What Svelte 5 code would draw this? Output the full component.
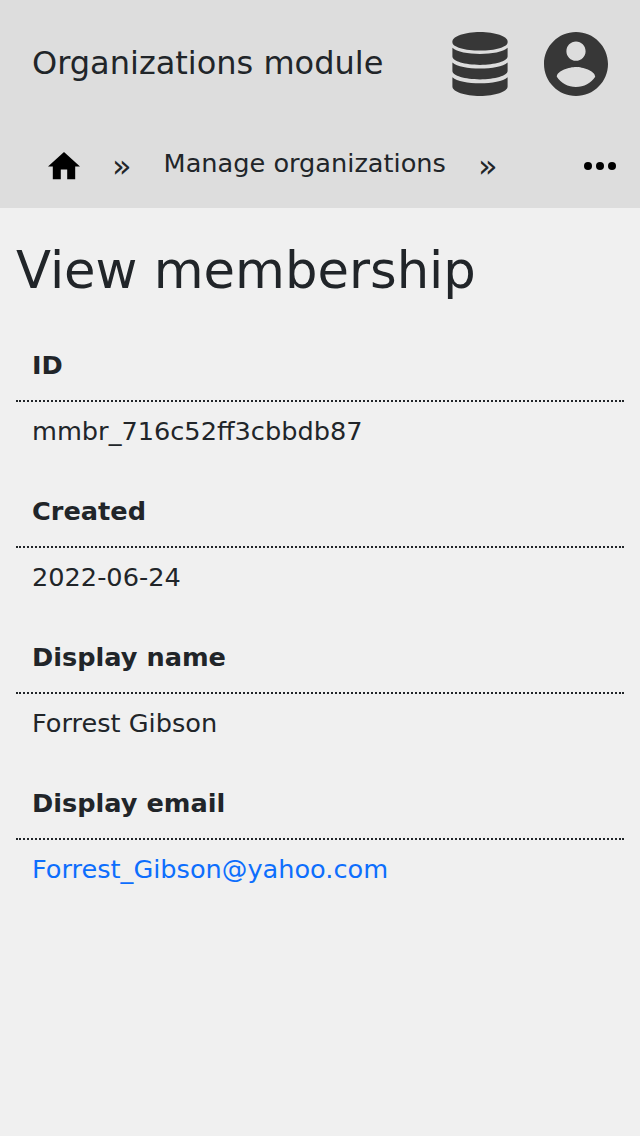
<script>
  const fields = [
    { label: 'ID', value: 'mmbr_716c52ff3cbbdb87' },
    { label: 'Created', value: '2022-06-24' },
    { label: 'Display name', value: 'Forrest Gibson' },
    { label: 'Display email', value: 'Forrest_Gibson@yahoo.com', href: 'mailto:Forrest_Gibson@yahoo.com' }
  ];
</script>

<header>
  <div class="bar">
    <span class="title">Organizations module</span>
    <svg class="db" width="56" height="64" viewBox="0 0 56 64" fill="#373737">
      <path d="M.4 9.500C.4 4.300 13 0 28 0s27.600 4.300 27.600 9.500V10.500C55.600 15 43 18.600 28 18.600S.4 15 .4 10.500z" />
      <path d="M.4 15.800C5 20 16 22 28 22S51 20 55.600 15.800V24.500C55.600 29 43 32.900 28 32.900S.4 29 .4 24.500z" />
      <path d="M.4 30.600C5 34.600 16 36.600 28 36.600S51 34.600 55.600 30.600V39C55.600 43.500 43 47.400 28 47.400S.4 43.500.4 39z" />
      <path d="M.4 45.200C5 49.200 16 51.200 28 51.200S51 49.200 55.600 45.200V54.500C55.600 59.700 43 64 28 64S.4 59.700.4 54.500z" />
    </svg>
    <svg class="user" width="64" height="64" viewBox="2 2 20 20" fill="#373737">
      <path d="M12 2C6.480 2 2 6.480 2 12s4.480 10 10 10 10-4.480 10-10S17.520 2 12 2zm0 3c1.660 0 3 1.340 3 3s-1.340 3-3 3-3-1.340-3-3 1.340-3 3-3zm0 14.200c-2.500 0-4.710-1.280-6-3.220.030-1.990 4-3.080 6-3.080 1.990 0 5.970 1.090 6 3.080-1.290 1.940-3.500 3.220-6 3.220z" />
    </svg>
  </div>
  <nav>
    <svg class="home" width="32" height="27.200" viewBox="2 3 20 17"><path d="M10 20v-6h4v6h5v-8h3L12 3 2 12h3v8z" /></svg>
    <span class="sep">»</span>
    <span class="crumb">Manage organizations</span>
    <span class="sep">»</span>
    <svg class="more" width="32" height="8" viewBox="0 0 32 8"><circle cx="4" cy="4" r="4" /><circle cx="16" cy="4" r="4" /><circle cx="28" cy="4" r="4" /></svg>
  </nav>
</header>
<main>
  <h1>View membership</h1>
  <dl>
    {#each fields as field}
      <dt>{field.label}</dt>
      <dd>{#if field.href}<a href={field.href}>{field.value}</a>{:else}{field.value}{/if}</dd>
    {/each}
  </dl>
</main>

<style>
  :global(body) { margin: 0; background: #f0f0f0; color: #212529; font-family: "DejaVu Sans", sans-serif; }
  header { height: 208px; background: #ddd; }
  .bar { height: 128px; display: flex; align-items: center; padding: 0 32px; box-sizing: border-box; }
  .title { flex: 1; margin-top: -2px; font-size: 32px; line-height: 48px; }
  .db { margin-right: 36px; }
  nav { height: 80px; display: flex; align-items: center; padding: 0 24px 4px 48px; box-sizing: border-box; font-size: 25.600px; line-height: 38px; }
  .sep { width: 20px; margin: 0 31.600px 0 32px; font-size: 32px; }
  .crumb { margin-top: -6px; }
  .more { margin: 0 0 0 auto; }
  main { padding: 0 16px; }
  h1 { margin: 0; padding-top: 32px; font-size: 51.200px; line-height: 61px; font-weight: 400; }
  dl { margin: 0; font-size: 25.600px; line-height: 38px; }
  dt { box-sizing: border-box; height: 73px; padding: 17px 16px 0; font-weight: 700; border-bottom: 2px dotted #212529; }
  dt:first-child { margin-top: 28px; }
  dd { box-sizing: border-box; height: 73px; margin: 0; padding: 10px 16px 0; }
  a { color: #0d6efd; text-decoration: none; }
</style>
